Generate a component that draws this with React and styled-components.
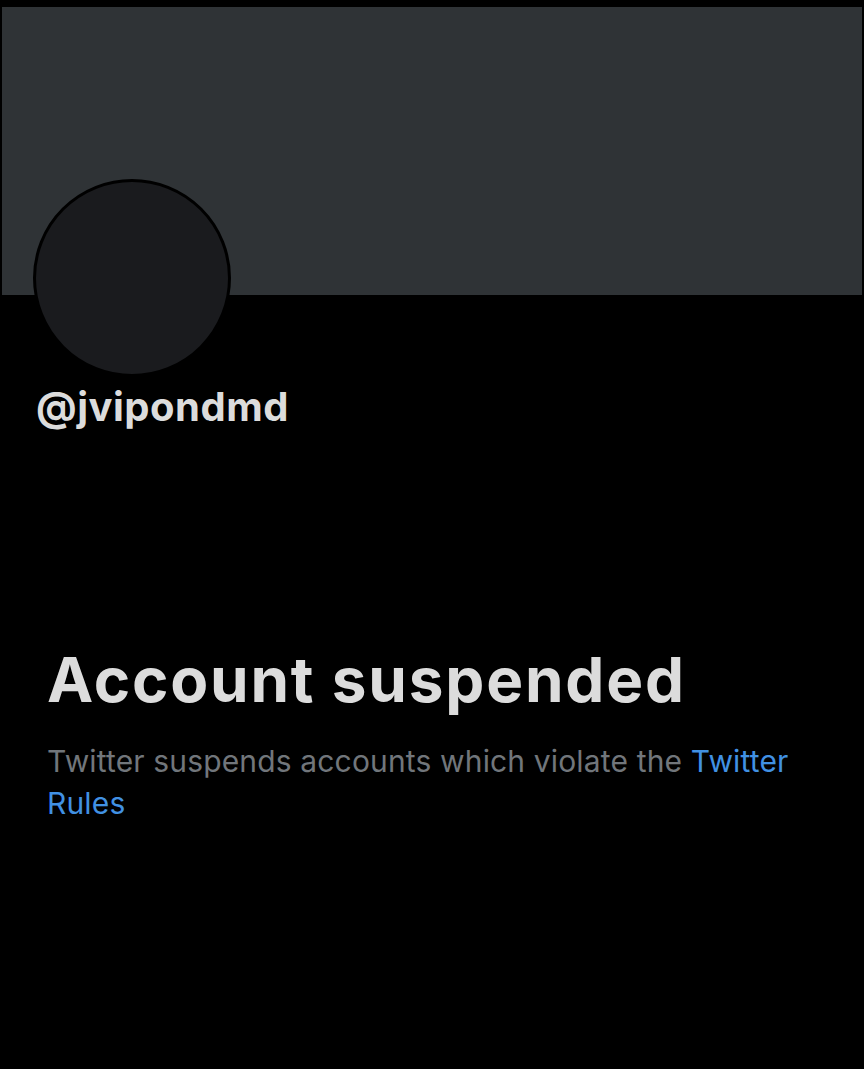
import React from 'react';
import styled, { createGlobalStyle } from 'styled-components';

const GlobalStyle = createGlobalStyle`
  html, body {
    margin: 0;
    padding: 0;
    background: #000;
  }
  body {
    font-family: Inter, "Liberation Sans", Arial, sans-serif;
    color: #dcdcdc;
  }
`;

const Page = styled.div`
  width: 864px;
  height: 1069px;
  background: #000;
  padding-top: 7px;
  box-sizing: border-box;
  overflow: hidden;
`;

const Banner = styled.div`
  height: 288px;
  margin: 0 2px;
  background: #2f3336;
`;

const ProfileHead = styled.div`
  padding-left: 33px;
`;

const Avatar = styled.div`
  width: 192px;
  height: 192px;
  margin-top: -116px;
  border-radius: 50%;
  border: 3px solid #000;
  background: #1a1b1e;
`;

const Handle = styled.div`
  margin: 2px 0 0 3px;
  font-size: 40px;
  line-height: 56px;
  font-weight: 700;
  letter-spacing: 0.5px;
  color: #dcdcdc;
`;

const Notice = styled.div`
  padding: 209px 40px 0 47px;
`;

const Title = styled.h1`
  margin: 0;
  font-size: 62px;
  line-height: 72px;
  font-weight: 700;
  letter-spacing: 1.8px;
  color: #dcdcdc;
`;

const Message = styled.p`
  margin: 24px 0 0;
  font-size: 30px;
  line-height: 42px;
  letter-spacing: 0.15px;
  color: #71767b;
`;

const Link = styled.a`
  color: #4191e3;
  text-decoration: none;
`;

export default function App() {
  return (
    <Page>
      <GlobalStyle />
      <Banner />
      <ProfileHead>
        <Avatar />
        <Handle>@jvipondmd</Handle>
      </ProfileHead>
      <Notice>
        <Title>Account suspended</Title>
        <Message>
          Twitter suspends accounts which violate the <Link href="#">Twitter Rules</Link>
        </Message>
      </Notice>
    </Page>
  );
}
